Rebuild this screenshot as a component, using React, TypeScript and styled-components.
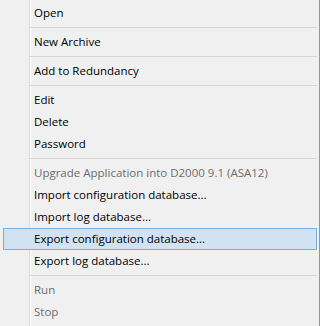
import styled, { createGlobalStyle } from 'styled-components';

const GlobalStyle = createGlobalStyle`
  html, body {
    margin: 0;
    padding: 0;
    background: #f0f0f0;
  }
`;

type Entry =
  | { kind: 'item'; label: string; disabled?: boolean; active?: boolean }
  | { kind: 'sep' };

const entries: Entry[] = [
  { kind: 'item', label: 'Open' },
  { kind: 'sep' },
  { kind: 'item', label: 'New Archive' },
  { kind: 'sep' },
  { kind: 'item', label: 'Add to Redundancy' },
  { kind: 'sep' },
  { kind: 'item', label: 'Edit' },
  { kind: 'item', label: 'Delete' },
  { kind: 'item', label: 'Password' },
  { kind: 'sep' },
  { kind: 'item', label: 'Upgrade Application into D2000 9.1 (ASA12)', disabled: true },
  { kind: 'item', label: 'Import configuration database...' },
  { kind: 'item', label: 'Import log database...' },
  { kind: 'item', label: 'Export configuration database...', active: true },
  { kind: 'item', label: 'Export log database...' },
  { kind: 'sep' },
  { kind: 'item', label: 'Run', disabled: true },
  { kind: 'item', label: 'Stop', disabled: true },
];

const App = () => {
  return (
    <>
      <GlobalStyle />
      <Menu>
        {entries.map((e, i) =>
          e.kind === 'sep' ? (
            <Separator key={i} />
          ) : (
            <Item key={i} $disabled={e.disabled} $active={e.active}>
              {e.label}
            </Item>
          )
        )}
      </Menu>
    </>
  );
};

export default App;

const Menu = styled.div`
  width: 319px;
  height: 325px;
  box-sizing: border-box;
  padding: 2px 0 2px 0;
  display: flex;
  flex-direction: column;

  background-color: #f0f0f0;
  background-image: linear-gradient(
    to right,
    transparent 29px,
    #d7d7d7 29px,
    #d7d7d7 30px,
    #ffffff 30px,
    #ffffff 31px,
    transparent 31px
  );
  border-right: 1px solid #979797;
  border-bottom: 1px solid #979797;
  box-sizing: content-box;

  font-family: 'Open Sans', 'Liberation Sans', sans-serif;
  font-size: 11.5px;
  color: #000;
`;

const Item = styled.div<{ $disabled?: boolean; $active?: boolean }>`
  height: 22px;
  box-sizing: border-box;
  margin: 0 2px 0 3px;
  padding-left: 30px;
  line-height: 20px;
  white-space: nowrap;
  border: 1px solid ${(p) => (p.$active ? '#78aee5' : 'transparent')};
  background: ${(p) => (p.$active ? '#d1e2f2' : 'transparent')};
  color: ${(p) => (p.$disabled ? '#6d6d6d' : '#000')};
`;

const Separator = styled.div`
  height: 7px;
  margin: 0 2px 0 30px;
  display: flex;
  flex-direction: column;

  &::before {
    content: '';
    margin-top: 3px;
    height: 1px;
    background: #d7d7d7;
  }
`;
